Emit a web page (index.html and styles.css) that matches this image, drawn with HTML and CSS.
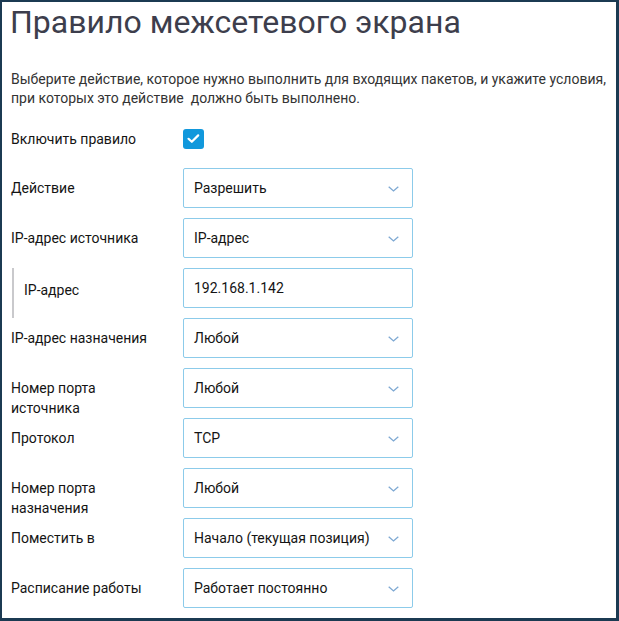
FILE: index.html
```html
<!DOCTYPE html>
<html lang="ru">
<head>
<meta charset="utf-8">
<title>Правило межсетевого экрана</title>
<link rel="stylesheet" href="styles.css">
</head>
<body>
<div class="frame">
  <h1 class="title">Правило межсетевого экрана</h1>
  <p class="desc">Выберите действие, которое нужно выполнить для входящих пакетов, и укажите условия,<br>при которых это действие&nbsp; должно быть выполнено.</p>

  <div class="row row-check">
    <div class="label">Включить правило</div>
    <span class="checkbox">
      <svg width="21" height="20" viewBox="0 0 21 20"><path d="M5.5 9.8 L8.8 12.8 L15.2 6.4" fill="none" stroke="#fff" stroke-width="2.2" stroke-linecap="round" stroke-linejoin="round"/></svg>
    </span>
  </div>

  <div class="row">
    <div class="label">Действие</div>
    <div class="select"><span>Разрешить</span><svg class="chev" width="11" height="6" viewBox="0 0 11 6"><path d="M0.7 0.7 L5.5 5 L10.3 0.7" fill="none" stroke="#7ea9d3" stroke-width="1.3"/></svg></div>
  </div>

  <div class="row">
    <div class="label">IP-адрес источника</div>
    <div class="select"><span>IP-адрес</span><svg class="chev" width="11" height="6" viewBox="0 0 11 6"><path d="M0.7 0.7 L5.5 5 L10.3 0.7" fill="none" stroke="#7ea9d3" stroke-width="1.3"/></svg></div>
  </div>

  <div class="row row-sub">
    <div class="label label-sub">IP-адрес</div>
    <div class="select input"><span>192.168.1.142</span></div>
  </div>

  <div class="row">
    <div class="label">IP-адрес назначения</div>
    <div class="select"><span>Любой</span><svg class="chev" width="11" height="6" viewBox="0 0 11 6"><path d="M0.7 0.7 L5.5 5 L10.3 0.7" fill="none" stroke="#7ea9d3" stroke-width="1.3"/></svg></div>
  </div>

  <div class="row">
    <div class="label">Номер порта источника</div>
    <div class="select"><span>Любой</span><svg class="chev" width="11" height="6" viewBox="0 0 11 6"><path d="M0.7 0.7 L5.5 5 L10.3 0.7" fill="none" stroke="#7ea9d3" stroke-width="1.3"/></svg></div>
  </div>

  <div class="row">
    <div class="label">Протокол</div>
    <div class="select"><span>TCP</span><svg class="chev" width="11" height="6" viewBox="0 0 11 6"><path d="M0.7 0.7 L5.5 5 L10.3 0.7" fill="none" stroke="#7ea9d3" stroke-width="1.3"/></svg></div>
  </div>

  <div class="row">
    <div class="label">Номер порта назначения</div>
    <div class="select"><span>Любой</span><svg class="chev" width="11" height="6" viewBox="0 0 11 6"><path d="M0.7 0.7 L5.5 5 L10.3 0.7" fill="none" stroke="#7ea9d3" stroke-width="1.3"/></svg></div>
  </div>

  <div class="row">
    <div class="label">Поместить в</div>
    <div class="select"><span>Начало (текущая позиция)</span><svg class="chev" width="11" height="6" viewBox="0 0 11 6"><path d="M0.7 0.7 L5.5 5 L10.3 0.7" fill="none" stroke="#7ea9d3" stroke-width="1.3"/></svg></div>
  </div>

  <div class="row">
    <div class="label">Расписание работы</div>
    <div class="select"><span>Работает постоянно</span><svg class="chev" width="11" height="6" viewBox="0 0 11 6"><path d="M0.7 0.7 L5.5 5 L10.3 0.7" fill="none" stroke="#7ea9d3" stroke-width="1.3"/></svg></div>
  </div>
</div>
</body>
</html>
```
FILE: styles.css
```css
* { box-sizing: border-box; }
html, body { margin: 0; padding: 0; background: #ffffff; }
body {
  font-family: Roboto, "Liberation Sans", Arial, sans-serif;
  width: 619px;
  height: 621px;
  overflow: hidden;
}
.frame {
  width: 619px;
  height: 621px;
  border-style: solid;
  border-color: #1b3a52;
  border-width: 2px 3px 3px 2px;
  padding: 2px 0 0 9px;
  background: #fff;
}
.title {
  margin: 0 0 0 -1px;
  font-size: 32px;
  line-height: 36px;
  font-weight: 400;
  color: #3d3e4c;
}
.desc {
  margin: 30px 0 21px 0;
  font-size: 14px;
  line-height: 19px;
  color: #333333;
  white-space: nowrap;
}
.row {
  display: flex;
  height: 40px;
  margin-bottom: 10px;
}
.row-check {
  height: 20px;
  margin-bottom: 19px;
  align-items: flex-start;
}
.label {
  width: 172px;
  flex: 0 0 172px;
  padding: 10px 26px 0 0;
  font-size: 14px;
  line-height: 20px;
  color: #141414;
}
.row-check .label { padding-top: 0; }
.label-sub {
  margin-left: 1px;
  flex-basis: 171px;
  width: 171px;
  height: 50px;
  border-left: 2px solid #c9c9cc;
  padding: 12px 0 0 10px;
}
.checkbox {
  display: block;
  width: 21px;
  height: 20px;
  border-radius: 3px;
  background: #1198dc;
}
.checkbox svg { display: block; }
.select {
  width: 230px;
  height: 40px;
  border: 1px solid #8ccbea;
  border-radius: 2px;
  display: flex;
  align-items: center;
  justify-content: space-between;
  padding: 0 13px 0 10px;
  font-size: 14px;
  line-height: 20px;
  color: #141414;
}
.chev { display: block; margin-top: 1px; }
```
